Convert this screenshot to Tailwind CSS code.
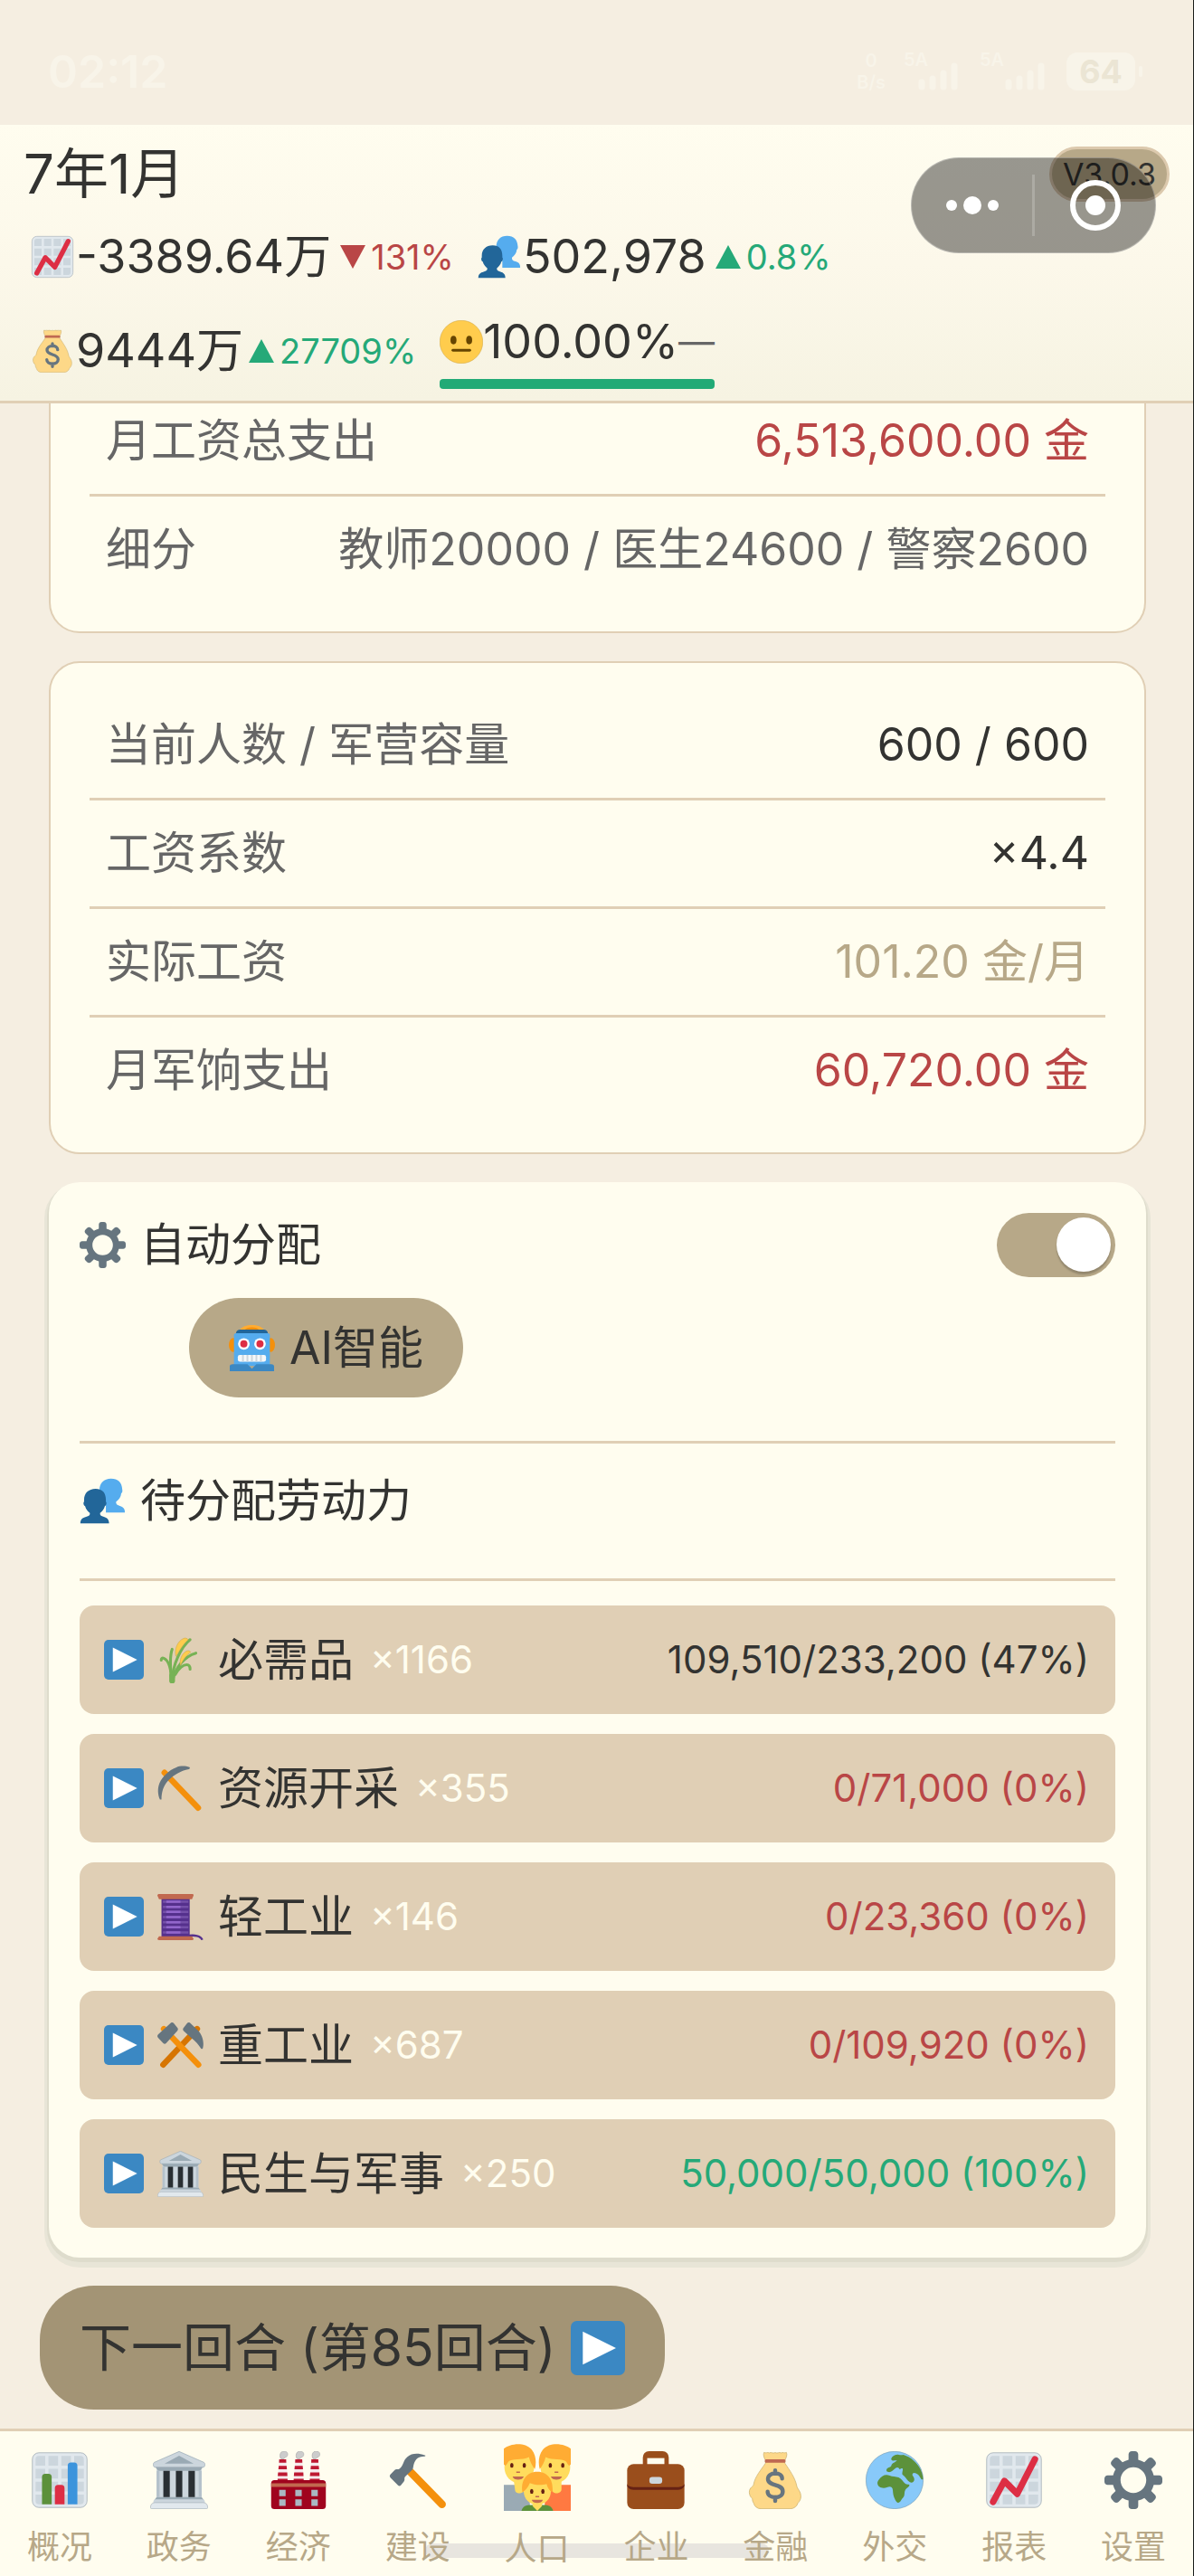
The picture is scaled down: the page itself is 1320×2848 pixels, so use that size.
<!DOCTYPE html>
<html lang="zh-CN">
<head>
    <meta charset="UTF-8">
    <meta name="viewport" content="width=device-width, initial-scale=1.0">
    <title>人口 - 第85回合</title>
    <script src="https://cdn.jsdelivr.net/npm/@tailwindcss/browser@4"></script>
</head>
<body class="min-h-screen flex flex-col bg-[#f5eee1] border-r border-[#1a1d1a] text-[#333331] font-['Inter','Noto_Sans_CJK_SC',sans-serif]">

    <!-- Icon set -->
    <svg class="hidden" aria-hidden="true">
        <symbol id="gear" viewBox="0 0 36 36">
            <path fill="#66757F" d="M34 15h-3.362c-.324-1.369-.864-2.651-1.582-3.814l2.379-2.379c.781-.781.781-2.048 0-2.829l-1.414-1.414c-.781-.781-2.047-.781-2.828 0l-2.379 2.379C23.65 6.225 22.369 5.686 21 5.362V2c0-1.104-.896-2-2-2h-2c-1.104 0-2 .896-2 2v3.362c-1.369.324-2.651.864-3.814 1.582L8.808 4.565c-.781-.781-2.048-.781-2.828 0L4.565 5.979c-.781.781-.781 2.048-.001 2.829l2.379 2.379C6.225 12.35 5.686 13.632 5.362 15H2c-1.104 0-2 .896-2 2v2c0 1.104.896 2 2 2h3.362c.324 1.368.864 2.65 1.582 3.813l-2.379 2.379c-.78.78-.78 2.048.001 2.829l1.414 1.414c.78.78 2.047.78 2.828 0l2.379-2.379c1.163.719 2.445 1.258 3.814 1.582V34c0 1.104.896 2 2 2h2c1.104 0 2-.896 2-2v-3.362c1.368-.324 2.65-.864 3.813-1.582l2.379 2.379c.781.781 2.047.781 2.828 0l1.414-1.414c.781-.781.781-2.048 0-2.829l-2.379-2.379c.719-1.163 1.258-2.445 1.582-3.814H34c1.104 0 2-.896 2-2v-2C36 15.896 35.104 15 34 15zM18 26c-4.418 0-8-3.582-8-8s3.582-8 8-8 8 3.582 8 8-3.582 8-8 8z"/>
        </symbol>
        <symbol id="grid" viewBox="0 0 36 36">
            <rect x="1" y="1" width="34" height="34" rx="4" fill="#E1E8ED" stroke="#aab4bb" stroke-width=".5"/>
            <path fill="#CCD6DD" d="M3 5a2 2 0 0 1 2-2h4v6H3zM11 3h6v6h-6zM19 3h6v6h-6zM27 3h4a2 2 0 0 1 2 2v4h-6zM3 11h6v6H3zM11 11h6v6h-6zM19 11h6v6h-6zM27 11h6v6h-6zM3 19h6v6H3zM11 19h6v6h-6zM19 19h6v6h-6zM27 19h6v6h-6zM3 27h6v6H5a2 2 0 0 1-2-2zM11 27h6v6h-6zM19 27h6v6h-6zM27 27h6v4a2 2 0 0 1-2 2h-4z"/>
        </symbol>
        <symbol id="trend" viewBox="0 0 36 36">
            <use href="#grid"/>
            <path d="M5 31.500L12 18.500l8 8L31 5" fill="none" stroke="#DD2E44" stroke-width="4" stroke-linecap="round" stroke-linejoin="round"/>
        </symbol>
        <symbol id="bars" viewBox="0 0 36 36">
            <use href="#grid"/>
            <path fill="#5C913B" d="M7 33V16a2 2 0 0 1 2-2h2a2 2 0 0 1 2 2v17z"/>
            <path fill="#DD2E44" d="M15 33V23a2 2 0 0 1 2-2h2a2 2 0 0 1 2 2v10z"/>
            <path fill="#3C94DC" d="M23 33V9a2 2 0 0 1 2-2h2a2 2 0 0 1 2 2v24z"/>
        </symbol>
        <symbol id="people" viewBox="0 0 36 36">
            <path fill="#55ACEE" d="M24.500.5c-5.500 0-9 3.500-9 9 0 4 2 8 5 10.500V27H35.300c.2-3-1.300-4.500-3.800-5.200-2.500-.7-3.200-1.600-3-3.300 2-1.500 3.800-3.500 4-6.500 1-.5 1-2 .8-3C33 3.500 30 .5 24.500.5z"/>
            <path fill="#226699" d="M12.500 8.500c-5.500 0-9 3.500-9 8.500v1.500c-.8.500-.5 3 .8 3.500.6 2.300 2 4 3.700 5.300.3 1.700-.7 2.300-3 3C2.300 31 .6 32.200.6 35.500H23c0-3.300-1.700-4.500-4-5.200-2.300-.7-3.300-1.300-3-3 1.700-1.300 3.100-3 3.700-5.300 1.300-.5 1.600-3 .8-3.500V17c0-5-2.500-8.500-8-8.500z"/>
        </symbol>
        <symbol id="money" viewBox="0 0 36 36">
            <path fill="#FDD888" stroke="#c9b070" stroke-width=".4" d="M11 .8c1.500.7 2-.4 3.300.3 1.300-.8 2.200.6 3.700-.2 1.500.8 2.400-.6 3.700.2 1.300-.7 1.800.4 3.300-.3.700 1.700-.3 3.500-1 5v1.600c3 4.600 6.500 9.100 7.500 14.600.2 1.300 2.500 3 2.500 6 0 2.500-1.200 3.500-2 4.500-.4 1.800-2.500 3.300-4.500 3.300H9c-2 0-3.800-1.300-4.300-3.300-.8-1.300-.9-2-.9-3-1.300-1-1.900-2.500-1.900-4 0-3 2.500-3.500 2.600-4.500 1-5.500 4.500-9 7.500-13.600V5.800c-.7-1.500-1.700-3.300-1-5z"/>
            <path fill="#BF6952" d="M12.300 5h11.400c1 0 1 2.200 0 2.200H12.300c-1 0-1-2.200 0-2.200z"/>
            <path d="M22.300 17c0-2-1.800-3.200-4.300-3.200s-4.500 1.500-4.500 3.500c0 4.700 9.200 2.700 9.200 7.700 0 2.200-2 3.700-4.700 3.700s-4.700-1.400-4.700-3.500M18 12v2M18 28.500v2.500" fill="none" stroke="#67757F" stroke-width="2.500" stroke-linecap="round"/>
        </symbol>
        <symbol id="neutral" viewBox="0 0 36 36">
            <circle cx="18" cy="18" r="17.800" fill="#FFCC4D" stroke="#cfa43c" stroke-width=".4"/>
            <ellipse cx="11.500" cy="16.500" rx="2.500" ry="3.500" fill="#664500"/>
            <ellipse cx="24.500" cy="16.500" rx="2.500" ry="3.500" fill="#664500"/>
            <path d="M11 25h14" stroke="#664500" stroke-width="2.200" stroke-linecap="round"/>
        </symbol>
        <symbol id="robot" viewBox="0 0 36 36">
            <ellipse cx="3.500" cy="15.500" rx="3.500" ry="5.500" fill="#F4900C"/>
            <ellipse cx="32.500" cy="15.500" rx="3.500" ry="5.500" fill="#F4900C"/>
            <path fill="#FFAC33" d="M8 4.500C10 1 14 0 18 0s8 1 10 4.500z"/>
            <path fill="#F4900C" d="M12 4.500C13 2.500 15 1.800 18 1.800s5 .7 6 2.700z"/>
            <path fill="#226699" d="M8.500 3.500h19c2 0 3 1.500 3 3.500h-25c0-2 1-3.500 3-3.500z"/>
            <path fill="#55ACEE" d="M4 8c0-1 .7-1.600 1.700-1.600h24.600c1 0 1.700.6 1.700 1.600v24H4z"/>
            <path fill="#3B88C3" d="M3 30.500h11.500l3.500 3.500 3.500-3.500H33c1.600 0 2.300.7 2.300 2V36H.7v-3.500c0-1.300.7-2 2.300-2z"/>
            <circle cx="11.700" cy="14.700" r="4.500" fill="#fff"/>
            <circle cx="24.300" cy="14.700" r="4.500" fill="#fff"/>
            <circle cx="11.700" cy="14.700" r="2.800" fill="#DD2E44"/>
            <circle cx="24.300" cy="14.700" r="2.800" fill="#DD2E44"/>
            <rect x="7" y="23.300" width="22" height="5.200" rx="1.500" fill="#F5F8FA"/>
            <path stroke="#CCD6DD" stroke-width="1.400" d="M11 23.300v5.200M14.500 23.300v5.200M18 23.300v5.200M21.500 23.300v5.200M25 23.300v5.200"/>
        </symbol>
        <symbol id="play" viewBox="0 0 36 36">
            <rect width="36" height="36" rx="4" fill="#3B88C3"/>
            <path fill="#fff" d="M8 7v22l22-11z"/>
        </symbol>
        <symbol id="rice" viewBox="0 0 36 36">
            <g fill="none" stroke="#77B255" stroke-linecap="round">
                <path d="M11.300 33.500C11 26 9 18 5 16.500c-1.500-.5-2 .5-2 1.500" stroke-width="2.200"/>
                <path d="M11 33.500C10 24 9.500 15 11.500 9.500" stroke-width="2.200"/>
                <path d="M11.500 33.500C12 22 18 8 25.500 2" stroke-width="2.200"/>
                <path d="M12 33.500C14 24 21 15 30 12.500" stroke-width="2.200"/>
                <path d="M14 29c3-5 6-7.500 9-7.500 2 0 2.500 1.500 2.500 3.500" stroke-width="2.200"/>
                <path d="M11.500 34v-4" stroke-width="4.500"/>
            </g>
            <path fill="#FFCC4D" stroke="#c9a94a" stroke-width=".4" d="M14.500 15c-1.500-5 1-12 6-14 1.500-.6 3 0 3.500 1-3.500 3-6.500 8-9.500 13zM18 22c-1-4 1-9 4.500-11 1.500-.8 3-.4 3.500.7-3.500 2.300-6 6-8 10.300z"/>
        </symbol>
        <symbol id="pickaxe" viewBox="0 0 36 36">
            <path d="M5.500 5.500l26.300 27.500" stroke="#F4900C" stroke-width="4.600" stroke-linecap="round"/>
            <path fill="#66757F" d="M25 1.300C22 .2 18 0 14.500 1.500 9 3.500 4 8.500 1.700 13.500 0 17.500.2 22.500 2 26.500h1.200c0-5.500 1.300-10.500 5.300-14.800S18 4 24.600 2.800c.8-.2 1-1.100.4-1.500z"/>
        </symbol>
        <symbol id="spool" viewBox="0 0 36 36">
            <path d="M23 32.800c6-1.300 11 0 12 3" fill="none" stroke="#55308D" stroke-width="1.700"/>
            <rect x="3.200" y="3" width="22" height="31" fill="#55308D"/>
            <path stroke="#7450A8" stroke-width="1.800" d="M4.300 6h19.900M4.300 10h19.900M4.300 14h19.900M4.300 18h19.900M4.300 22h19.900M4.300 26h19.900M4.300 30h19.900"/>
            <path stroke="#9266CC" stroke-width="1.800" d="M7 6h11M7 10h11M7 14h11M7 18h11M7 22h11M7 26h11M7 30h11"/>
            <path fill="#C1694F" d="M0 1.300C0 .4.600 0 1.300 0h25.900c.7 0 1.200.4 1 1.300L27 4H1.300zM1.300 33H27l1.200 2c.2.600-.3 1-1 1H1.300C.6 36 0 35.600 0 35z"/>
        </symbol>
        <symbol id="crossed" viewBox="0 0 36 36">
            <path d="M31 5L4.500 33" stroke="#D67503" stroke-width="4.600" stroke-linecap="round"/>
            <path d="M5 5l27 28" stroke="#F4900C" stroke-width="4.600" stroke-linecap="round"/>
            <path fill="#66757F" d="M10.500.4c1-.6 1.700-.4 2.500.4l2.700 3.500c.6.900.4 1.500-.1 2.300L6.800 16.200c-.8.700-1.500.6-2.200 0L.6 12c-.8-1-.8-1.700 0-2.600zM25.500.4c-1-.6-1.700-.4-2.500.4l-2.600 3.500c-.7.900-.5 1.600 0 2.300l6 5.400c3.300 2.500 5.500 5 7.600 8.300.6.700 1.300.5 1.500-.3 1.300-5.500-1-10.700-3.700-13.600z"/>
        </symbol>
        <symbol id="temple" viewBox="0 0 36 36">
            <rect x="4" y="9" width="28" height="22" fill="#CCD6DD"/>
            <path fill="#9AAAB4" d="M3 9.500h30l-2 2.800H5zM4 28.500h28l1.500 2h-31z"/>
            <path fill="#B4C1CA" d="M4 12.300h1.800v16.200H4zM30.200 12.300H32v16.200h-1.800z"/>
            <path fill="#292F33" d="M8.200 12.300h4v16.200h-4zM16 12.300h4v16.200h-4zM23.800 12.300h4v16.200h-4z"/>
            <path fill="#CCD6DD" stroke="#9AAAB4" stroke-width=".4" d="M18 .2L33.500 7c.8.400.8 3-.6 3H3.100c-1.400 0-1.400-2.600-.6-3z"/>
            <path fill="#9AAAB4" d="M18 2.800l9 5H9z"/>
            <rect x="2" y="30" width="32" height="4" rx="1.500" fill="#CCD6DD"/>
            <path fill="#E1E8ED" stroke="#aab4bb" stroke-width=".4" d="M3 32h30c2 0 2.800 1.500 2.800 3 0 .5-.2.800-.8.800H1c-.6 0-.8-.3-.8-.8C.2 33.500 1 32 3 32z"/>
        </symbol>
        <symbol id="factory" viewBox="0 0 36 36">
            <g fill="#CCCCCC" stroke="#aaa" stroke-width=".4">
                <path id="puff" d="M7 4.500C6 3 6.500 0 9 0s2.800 2.500 1.500 3.500C9 4 9 5 8 5z"/>
                <use href="#puff" x="10"/>
                <use href="#puff" x="20"/>
            </g>
            <g id="stack">
                <path fill="#F5E9EC" d="M6 5h4.300l1 13.500H5z"/>
                <path fill="#BE1931" d="M6 5h4.300l.1 2.200H5.900zM5.700 9.200h4.900l.2 2H5.500zM5.300 13.200H11l.1 2.200h-6zM5 17.200h6.200v2H5z"/>
            </g>
            <use href="#stack" x="10"/>
            <use href="#stack" x="20"/>
            <path fill="#A0041E" d="M3 18h30c1.300 0 2 .8 2 2v14c0 1.300-.8 2-2 2H3c-1.300 0-2-.7-2-2V20c0-1.200.7-2 2-2z"/>
            <path fill="#C1694F" d="M1 20h34v2.200H1z"/>
            <path fill="#AAB8C2" d="M6 24h4v4H6zM16 24h4v4h-4zM26 24h4v4h-4zM6 30h4v4H6zM16 30h4v4h-4zM26 30h4v4h-4z"/>
        </symbol>
        <symbol id="hammer" viewBox="0 0 36 36">
            <path d="M13 12.500l20 20.500" stroke="#F4900C" stroke-width="4.800" stroke-linecap="round"/>
            <path fill="#66757F" d="M22.300 2.500C18 1 14 1.300 11.500 3.500 8.500 6 9.500 8.500 6.500 11c-1 .7-2-.2-3 .8L.9 14.500c-.6.700-.5 1.300 0 1.900l4.600 4.700c.7.700 1.400.7 2 0l1.800-2.300c.9-1-.1-2 .7-2.900l4.500-4.400c1-1 .2-3.500 2.500-6.500 1.200-1.300 3-1.600 5.100-1.800.8-.1.800-.6.200-.7z"/>
        </symbol>
        <symbol id="family" viewBox="0 0 36 36">
            <path fill="#9AAAB4" d="M0 22h14v14H0z"/>
            <path fill="#FF7941" d="M22 22h14v14H22z"/>
            <path fill="#FFDC5D" d="M5 17h6v7.500c0 2.500-5 3-5 0zM25 17h6v7.500c0 2.500-5 3-5 0z"/>
            <ellipse cx="8.300" cy="12.500" rx="8" ry="8.600" fill="#FFDC5D"/>
            <ellipse cx="27.700" cy="12.500" rx="8" ry="8.600" fill="#FFDC5D"/>
            <path fill="#FFAC33" d="M0 11V2.500C3 0 11-1.500 15 3c2.500 3 2.500 7.500 1.700 10.500C15.500 12 14 9.500 13.500 7 10 9 4 7.500 2.500 9.500 1.500 11 1 12.500 0 11zM36 11V2.500C33 0 25-1.500 21 3c-2.500 3-2.500 7.500-1.700 10.500C20.500 12 22 9.500 22.500 7 26 9 32 7.500 33.500 9.500c1 1.500 1.500 3 2.500 1.500z"/>
            <path fill="#5C913B" d="M9.500 36c.5-2.500 2.500-3.200 5-3.200h7c2.500 0 4.500.7 5 3.200z"/>
            <path fill="#FFDC5D" d="M15.500 29h5v4.500L18 36l-2.500-2.500z"/>
            <circle cx="18" cy="25.500" r="7.300" fill="#FFDC5D"/>
            <path fill="#FFAC33" d="M10 26c-1-6 2-11 8-11s9 5 8 11c-1.500-1-2.500-2.500-3-4.500-3 1-7 .5-9-.5-1 2.500-2.500 4-4 5z"/>
            <g fill="#662113">
                <ellipse cx="4.300" cy="11.500" rx=".9" ry="1.300"/><ellipse cx="11" cy="11.500" rx=".9" ry="1.300"/>
                <ellipse cx="25" cy="11.500" rx=".9" ry="1.300"/><ellipse cx="31.700" cy="11.500" rx=".9" ry="1.300"/>
                <ellipse cx="15" cy="25.500" rx=".9" ry="1.300"/><ellipse cx="21" cy="25.500" rx=".9" ry="1.300"/>
            </g>
            <path fill="#C1694F" d="M4.700 17.500h6c-.5 2.300-5.500 2.300-6 0zM25.300 17.500h6c-.5 2.300-5.500 2.300-6 0zM15 30h6c-.5 2.300-5.500 2.300-6 0zM6.700 14.800h2v.8h-2zM27.300 14.800h2v.8h-2zM17 28h2v.7h-2z"/>
        </symbol>
        <symbol id="briefcase" viewBox="0 0 36 36">
            <path d="M11.300 9V4c0-1.600 1-2.600 2.500-2.600h8.400c1.500 0 2.500 1 2.500 2.600v5" fill="none" stroke="#9A4E1C" stroke-width="2.700"/>
            <path fill="#9A4E1C" d="M12 2h12v2.300H12z"/>
            <rect x=".2" y="8" width="35.600" height="28" rx="4" fill="#9A4E1C"/>
            <path fill="#662113" d="M.2 20v1c0 1.800 1.700 3 3.800 3h28c2 0 3.800-1.200 3.800-3v-1c0 1.600-1.800 2.300-3.800 2.300H4C2 22.300.2 21.600.2 20z"/>
            <rect x="14" y="16" width="8" height="4.200" rx="1.800" fill="#CCD6DD"/>
        </symbol>
        <symbol id="globe" viewBox="0 0 36 36">
            <circle cx="18" cy="18" r="17.800" fill="#88C9F9" stroke="#7ea3bd" stroke-width=".4"/>
            <path fill="#5C913B" d="M16 4.500c.5-1.500 2.500-2.500 4.500-2.300 1 .1 2 .3 3 0C30 4.200 35.500 10.500 35.700 17.500c-1 .5-1.300-.5-2-1.500-.6-1.200-2-2.500-3.500-2.500-1 0-1.500 1-.8 2 .8 1 1.300 2.500.3 3.500-1 .8-2 .6-3.300-.6-1-1-1.800-2.600-3.300-3.600-.8-.6 0-2.300 0-3.500 0-1-1-.5-2 0-.5-1.300-1.500-1.500-2.500-.8-1.500 1.100-2.700 2.700-4.300 2.500-1.300-.1-1.800-1.100-1-2.200.7-.8 2.400-.8 2.700-2 .4-1.500 2.500-1.800 3.500-3-1-.3-2.200.3-3-.1-.7-.3-.7-.7-.5-1.200z"/>
            <path fill="#5C913B" d="M8 18c2-3 4.500-3.800 7-2.800 1.500.7 3.700.6 5.500 1.100 2 .8 2.700 2.700 4.200 4 .7.600 2.200.2 2.500.7.300 1-1.800 2-2.500 3-1 1.700 0 3.500-1.500 5-1.200 1.200-1.500 3-3 3-1.300 0-2.500-3-3-5-.4-1.800 0-3.500-1-4.500-1.500-1-3 .4-5 .4-2.300 0-3.500-1.200-3.800-2.500-.2-.9.100-1.700.6-2.400z"/>
        </symbol>
    </svg>

    <!-- Phone status bar -->
    <div class="flex items-center justify-between h-[138px] pt-5 pl-[53px] pr-14 text-[#f8f4e9] font-semibold">
        <span class="text-[50px]">02:12</span>
        <div class="flex items-center gap-5">
            <span class="text-center text-xl leading-6">0<br>B/s</span>
            <div class="w-[64px] h-[46px] flex flex-col">
                <span class="text-xl leading-5">5A</span>
                <svg class="self-end -mt-2 w-12 h-8" viewBox="0 0 48 32" fill="none" stroke="currentColor" stroke-width="7" stroke-linecap="round"><path d="M4 23v5M16 19v9M28 13v15M40 5v23"/></svg>
            </div>
            <div class="w-[76px] h-[46px] flex flex-col">
                <span class="text-xl leading-5">5A</span>
                <svg class="self-end -mt-2 w-12 h-8" viewBox="0 0 48 32" fill="none" stroke="currentColor" stroke-width="7" stroke-linecap="round"><path d="M4 23v5M16 19v9M28 13v15M40 5v23"/></svg>
            </div>
            <div class="flex items-center gap-1">
                <span class="w-[76px] h-[42px] rounded-xl bg-[#f8f4e9] text-[#ebe5d4] text-4xl leading-[42px] text-center font-bold">64</span>
                <span class="w-1 h-3 rounded-full bg-[#f8f4e9]"></span>
            </div>
        </div>
    </div>

    <!-- Header -->
    <header class="relative bg-linear-to-b from-[#fffdef] via-[#fcf8ea] to-[#f6f3e2] border-b-[3px] border-[#e0cfb5] px-[26px] pt-[18px] pb-[13px]">
        <h1 class="text-[60px] leading-[72px]">7年1月</h1>
        <div class="mt-6 flex flex-col gap-[30px] pl-2 text-[52px] leading-[64px]">
            <div class="flex items-center gap-[26px]">
                <div class="flex items-center gap-0.5">
                    <svg class="w-12 h-12"><use href="#trend"/></svg>
                    <span>-3389.64万</span>
                    <span class="flex items-center gap-1.5 ml-2 text-[38px] text-[#b94646]">
                        <svg class="w-7 h-6.5" viewBox="0 0 28 26" fill="currentColor"><path d="M0 0h28L14 26z"/></svg>131%
                    </span>
                </div>
                <div class="flex items-center gap-0.5">
                    <svg class="w-12 h-12"><use href="#people"/></svg>
                    <span>502,978</span>
                    <span class="flex items-center gap-1.5 ml-2 text-[38px] text-[#25a978]">
                        <svg class="w-7 h-6.5" viewBox="0 0 28 26" fill="currentColor"><path d="M14 0l14 26H0z"/></svg>0.8%
                    </span>
                </div>
            </div>
            <div class="flex items-center gap-[26px]">
                <div class="flex items-center gap-0.5">
                    <svg class="w-12 h-12"><use href="#money"/></svg>
                    <span>9444万</span>
                    <span class="flex items-center gap-1.5 ml-1 text-[38px] text-[#25a978]">
                        <svg class="w-7 h-6.5" viewBox="0 0 28 26" fill="currentColor"><path d="M14 0l14 26H0z"/></svg>27709%
                    </span>
                </div>
                <div class="flex flex-col gap-[9px]">
                    <div class="flex items-center">
                        <svg class="w-12 h-12"><use href="#neutral"/></svg>
                        <span>100.00%</span>
                        <span class="text-[40px] text-[#666]">—</span>
                    </div>
                    <div class="h-[11px] rounded-sm bg-[#22aa76]"></div>
                </div>
            </div>
        </div>

        <!-- Version badge, with the mini-program capsule floating over it -->
        <span class="absolute top-6 right-[26px] h-[61px] px-3 rounded-full border-[3px] border-[#dcc9ad] bg-[#b7a888] text-[34px] leading-[55px]">V3.0.3</span>
        <div class="absolute top-9 right-[41px] w-[271px] h-[106px] flex items-center rounded-full border border-white/30 bg-black/40 text-white">
            <button type="button" aria-label="更多" class="flex-1 flex justify-center">
                <svg class="w-16 h-16" viewBox="0 0 64 64" fill="currentColor"><circle cx="9" cy="32" r="6"/><circle cx="32" cy="32" r="10"/><circle cx="55" cy="32" r="6"/></svg>
            </button>
            <span class="w-[3px] h-[68px] bg-white/20"></span>
            <button type="button" aria-label="关闭" class="flex-1 flex justify-center">
                <svg class="w-16 h-16" viewBox="0 0 64 64"><circle cx="32" cy="32" r="25" fill="none" stroke="currentColor" stroke-width="6"/><circle cx="32" cy="32" r="11" fill="currentColor"/></svg>
            </button>
        </div>
    </header>

    <!-- Scrolled content -->
    <main class="flex-1 flex flex-col gap-[31px] overflow-hidden pl-[54px] pr-[52px]">
        <dl class="-mt-[51px] px-[43px] py-8 rounded-[34px] border-2 border-[#e0cfb5] bg-[#fffdef] text-[50px] text-[#666]">
            <div class="flex items-center justify-between h-[120px] px-[18px] border-b-[3px] border-[#e0cfb5]">
                <dt>月工资总支出</dt>
                <dd class="text-[#b94646]">6,513,600.00 金</dd>
            </div>
            <div class="flex items-center justify-between h-[117px] px-[18px]">
                <dt>细分</dt>
                <dd>教师20000 / 医生24600 / 警察2600</dd>
            </div>
        </dl>

        <dl class="px-[43px] py-8 rounded-[34px] border-2 border-[#e0cfb5] bg-[#fffdef] text-[50px] text-[#666]">
            <div class="flex items-center justify-between h-[120px] px-[18px] border-b-[3px] border-[#e0cfb5]">
                <dt>当前人数 / 军营容量</dt>
                <dd class="text-[#333331]">600 / 600</dd>
            </div>
            <div class="flex items-center justify-between h-[120px] px-[18px] border-b-[3px] border-[#e0cfb5]">
                <dt>工资系数</dt>
                <dd class="text-[#333331]">×4.4</dd>
            </div>
            <div class="flex items-center justify-between h-[120px] px-[18px] border-b-[3px] border-[#e0cfb5]">
                <dt>实际工资</dt>
                <dd class="text-[#b7a888]">101.20 金/月</dd>
            </div>
            <div class="flex items-center justify-between h-[117px] px-[18px]">
                <dt>月军饷支出</dt>
                <dd class="text-[#b94646]">60,720.00 金</dd>
            </div>
        </dl>

        <section class="px-[34px] py-[33px] rounded-[34px] bg-[#fffdef] shadow-[0_3px_0_2px_#dedccc,0_6px_0_5px_#e8e5d7] text-[50px] leading-[72px]">
            <div class="flex items-center justify-between">
                <label for="auto" class="flex items-center gap-4">
                    <svg class="w-[51px] h-[51px]"><use href="#gear"/></svg>自动分配
                </label>
                <input id="auto" type="checkbox" role="switch" checked class="appearance-none w-[131px] h-[71px] rounded-full bg-[#b7a888] flex items-center justify-end pr-[5px] before:content-[''] before:w-[60px] before:h-[60px] before:rounded-full before:bg-white before:shadow-[0_3px_2px_rgba(0,0,0,0.2)]">
            </div>
            <button type="button" class="mt-[23px] ml-[121px] flex items-center gap-4 h-[110px] px-11 rounded-full bg-[#b7a888]">
                <svg class="w-[51px] h-[51px]"><use href="#robot"/></svg>AI智能
            </button>
            <div class="mt-[48px] py-[27px] h-[155px] border-y-[3px] border-[#e0cfb5]">
                <h2 class="flex items-center gap-4">
                    <svg class="w-[51px] h-[51px]"><use href="#people"/></svg>待分配劳动力
                </h2>
            </div>

            <div class="mt-[27px] flex flex-col gap-[22px]">
                <button type="button" class="flex items-center h-[120px] pl-[27px] pr-[29px] rounded-2xl bg-[#e0cfb5]">
                    <svg class="w-11 h-11"><use href="#play"/></svg>
                    <svg class="w-[51px] h-[51px] ml-[15px]"><use href="#rice"/></svg>
                    <span class="ml-4">必需品</span>
                    <span class="ml-[18px] text-[42px] text-[#fffdef]">×1166</span>
                    <span class="ml-auto text-[42px]">109,510/233,200 (47%)</span>
                </button>
                <button type="button" class="flex items-center h-[120px] pl-[27px] pr-[29px] rounded-2xl bg-[#e0cfb5]">
                    <svg class="w-11 h-11"><use href="#play"/></svg>
                    <svg class="w-[51px] h-[51px] ml-[15px]"><use href="#pickaxe"/></svg>
                    <span class="ml-4">资源开采</span>
                    <span class="ml-[18px] text-[42px] text-[#fffdef]">×355</span>
                    <span class="ml-auto text-[42px] text-[#b94646]">0/71,000 (0%)</span>
                </button>
                <button type="button" class="flex items-center h-[120px] pl-[27px] pr-[29px] rounded-2xl bg-[#e0cfb5]">
                    <svg class="w-11 h-11"><use href="#play"/></svg>
                    <svg class="w-[51px] h-[51px] ml-[15px]"><use href="#spool"/></svg>
                    <span class="ml-4">轻工业</span>
                    <span class="ml-[18px] text-[42px] text-[#fffdef]">×146</span>
                    <span class="ml-auto text-[42px] text-[#b94646]">0/23,360 (0%)</span>
                </button>
                <button type="button" class="flex items-center h-[120px] pl-[27px] pr-[29px] rounded-2xl bg-[#e0cfb5]">
                    <svg class="w-11 h-11"><use href="#play"/></svg>
                    <svg class="w-[51px] h-[51px] ml-[15px]"><use href="#crossed"/></svg>
                    <span class="ml-4">重工业</span>
                    <span class="ml-[18px] text-[42px] text-[#fffdef]">×687</span>
                    <span class="ml-auto text-[42px] text-[#b94646]">0/109,920 (0%)</span>
                </button>
                <button type="button" class="flex items-center h-[120px] pl-[27px] pr-[29px] rounded-2xl bg-[#e0cfb5]">
                    <svg class="w-11 h-11"><use href="#play"/></svg>
                    <svg class="w-[51px] h-[51px] ml-[15px]"><use href="#temple"/></svg>
                    <span class="ml-4">民生与军事</span>
                    <span class="ml-[18px] text-[42px] text-[#fffdef]">×250</span>
                    <span class="ml-auto text-[42px] text-[#25a978]">50,000/50,000 (100%)</span>
                </button>
            </div>
        </section>

        <button type="button" class="self-start -ml-[10px] flex items-center gap-4 h-[137px] px-11 rounded-[60px] bg-[#a39475] text-[57px]">
            下一回合 (第85回合)
            <svg class="w-15 h-15"><use href="#play"/></svg>
        </button>
    </main>

    <!-- Bottom navigation -->
    <nav class="relative grid grid-cols-10 h-[163px] border-t-[3px] border-[#e0cfb5] bg-[#fffdef] pt-[22px] text-4xl leading-[44px] text-[#b7a888]">
        <span class="absolute left-1/2 bottom-5 -translate-x-1/2 w-[380px] h-4 rounded-full bg-[#e8e5df]"></span>
        <a href="#overview" class="relative flex flex-col items-center gap-5"><svg class="w-16 h-16"><use href="#bars"/></svg>概况</a>
        <a href="#politics" class="relative flex flex-col items-center gap-5"><svg class="w-16 h-16"><use href="#temple"/></svg>政务</a>
        <a href="#economy" class="relative flex flex-col items-center gap-5"><svg class="w-16 h-16"><use href="#factory"/></svg>经济</a>
        <a href="#build" class="relative flex flex-col items-center gap-5"><svg class="w-16 h-16"><use href="#hammer"/></svg>建设</a>
        <a href="#population" aria-current="page" class="relative flex flex-col items-center gap-5"><svg class="w-[74px] h-[74px] -mt-2"><use href="#family"/></svg>人口</a>
        <a href="#company" class="relative flex flex-col items-center gap-5"><svg class="w-16 h-16"><use href="#briefcase"/></svg>企业</a>
        <a href="#finance" class="relative flex flex-col items-center gap-5"><svg class="w-16 h-16"><use href="#money"/></svg>金融</a>
        <a href="#diplomacy" class="relative flex flex-col items-center gap-5"><svg class="w-16 h-16"><use href="#globe"/></svg>外交</a>
        <a href="#reports" class="relative flex flex-col items-center gap-5"><svg class="w-16 h-16"><use href="#trend"/></svg>报表</a>
        <a href="#settings" class="relative flex flex-col items-center gap-5"><svg class="w-16 h-16"><use href="#gear"/></svg>设置</a>
    </nav>
</body>
</html>
